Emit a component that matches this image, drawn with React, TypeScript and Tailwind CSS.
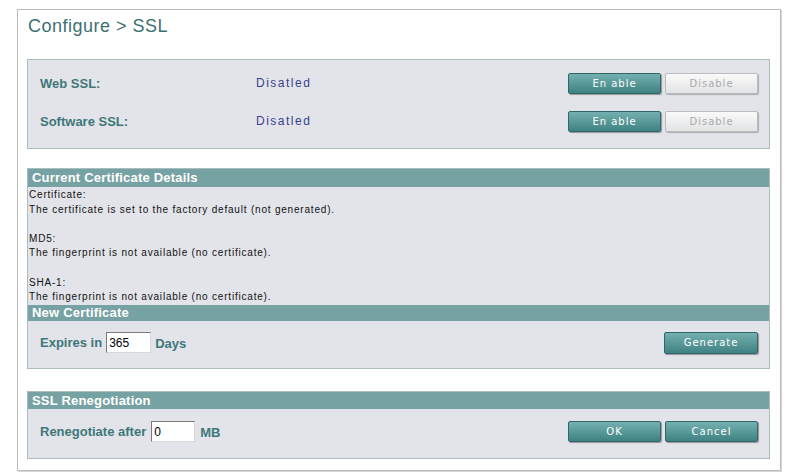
import React from 'react';

const sans = { fontFamily: '"Liberation Sans", Arial, sans-serif' };
const btnFont = { fontFamily: '"DejaVu Sans", sans-serif' };

function TealButton({ label, w = 'w-[93px]', h = 'h-[21px]' }: { label: string; w?: string; h?: string }) {
  return (
    <button
      className={`${h} ${w} rounded-[2px] border border-[#2f6667] bg-gradient-to-b from-[#74b0b0] to-[#3f8283] text-[10px] tracking-[1px] text-white shadow-[1px_1px_1px_rgba(0,0,0,0.35)]`}
      style={btnFont}
    >
      {label}
    </button>
  );
}

function GrayButton({ label }: { label: string }) {
  return (
    <button
      className="h-[21px] w-[93px] rounded-[2px] border border-[#b9bcbf] bg-gradient-to-b from-[#fafafa] to-[#e2e3e5] text-[10px] tracking-[1px] text-[#a9abad] shadow-[1px_1px_1px_rgba(0,0,0,0.25)]"
      style={btnFont}
    >
      {label}
    </button>
  );
}

function Header({ title, className = '' }: { title: string; className?: string }) {
  return (
    <div className={`bg-[#77a2a3] pl-[4px] text-[13px] font-bold tracking-[0.2px] text-white ${className}`}>
      {title}
    </div>
  );
}

function Label({ children }: { children: React.ReactNode }) {
  return <span className="text-[13px] font-bold text-[#3e7778]">{children}</span>;
}

function SslRow({ name }: { name: string }) {
  return (
    <div className="flex h-[38px] items-center">
      <div className="w-[216px]">
        <Label>{name}</Label>
      </div>
      <div className="flex-1 text-[12px] tracking-[1.5px] text-[#383f90]">Disatled</div>
      <div className="flex gap-[4px]">
        <TealButton label="En able" />
        <GrayButton label="Disable" />
      </div>
    </div>
  );
}

export default function App() {
  return (
    <div className="min-h-[473px] bg-white pl-[17px] pt-[9px]" style={sans}>
      <div className="flex h-[462px] w-[764px] flex-col border border-[#bcbcbc] pl-[9px] pr-[10px] shadow-[1px_1px_0_#d6d6d6]">
        <h1 className="mt-[5px] h-[44px] pl-[1px] text-[18px] leading-[22px] tracking-[0.5px] text-[#3c7072]">
          Configure &gt; SSL
        </h1>

        {/* ssl toggles */}
        <div className="flex h-[90px] flex-col border border-[#a9bcbe] bg-[#e3e4e9] pl-[12px] pr-[11px] pt-[4px]">
          <SslRow name="Web SSL:" />
          <SslRow name="Software SSL:" />
        </div>

        {/* certificate */}
        <div className="mt-[19px] flex h-[201px] flex-col border border-[#a9bcbe] bg-[#e3e4e9]">
          <Header title="Current Certificate Details" className="h-[18px] leading-[18px]" />
          <div className="h-[118px] pl-[1px] pt-[1px] text-[10px] leading-[14.6px] tracking-[0.8px] text-[#111]">
            <div>Certificate:</div>
            <div>The certificate is set to the factory default (not generated).</div>
            <div>&nbsp;</div>
            <div>MD5:</div>
            <div>The fingerprint is not available (no certificate).</div>
            <div>&nbsp;</div>
            <div>SHA-1:</div>
            <div>The fingerprint is not available (no certificate).</div>
          </div>
          <Header title="New Certificate" className="h-[16px] leading-[16px]" />
          <div className="flex flex-1 items-center pb-[4px] pl-[12px] pr-[11px]">
            <Label>Expires in</Label>
            <input
              defaultValue="365"
              className="ml-[4px] h-[21px] w-[45px] border border-[#7a7a7a] border-b-[#d8d8d8] border-r-[#d8d8d8] bg-white pl-[2px] text-[12px] text-black outline-none"
            />
            <span className="ml-[4px]">
              <Label>Days</Label>
            </span>
            <div className="flex-1" />
            <TealButton label="Generate" w="w-[94px]" h="h-[22px]" />
          </div>
        </div>

        {/* renegotiation */}
        <div className="mt-[22px] flex h-[68px] flex-col border border-[#a9bcbe] bg-[#e3e4e9]">
          <Header title="SSL Renegotiation" className="h-[17px] leading-[17px]" />
          <div className="flex flex-1 items-center pb-[4px] pl-[12px] pr-[11px]">
            <Label>Renegotiate after</Label>
            <input
              defaultValue="0"
              className="ml-[5px] h-[21px] w-[44px] border border-[#7a7a7a] border-b-[#d8d8d8] border-r-[#d8d8d8] bg-white pl-[2px] text-[12px] text-black outline-none"
            />
            <span className="ml-[5px]">
              <Label>MB</Label>
            </span>
            <div className="flex-1" />
            <div className="flex gap-[4px]">
              <TealButton label="OK" />
              <TealButton label="Cancel" />
            </div>
          </div>
        </div>
      </div>
    </div>
  );
}
